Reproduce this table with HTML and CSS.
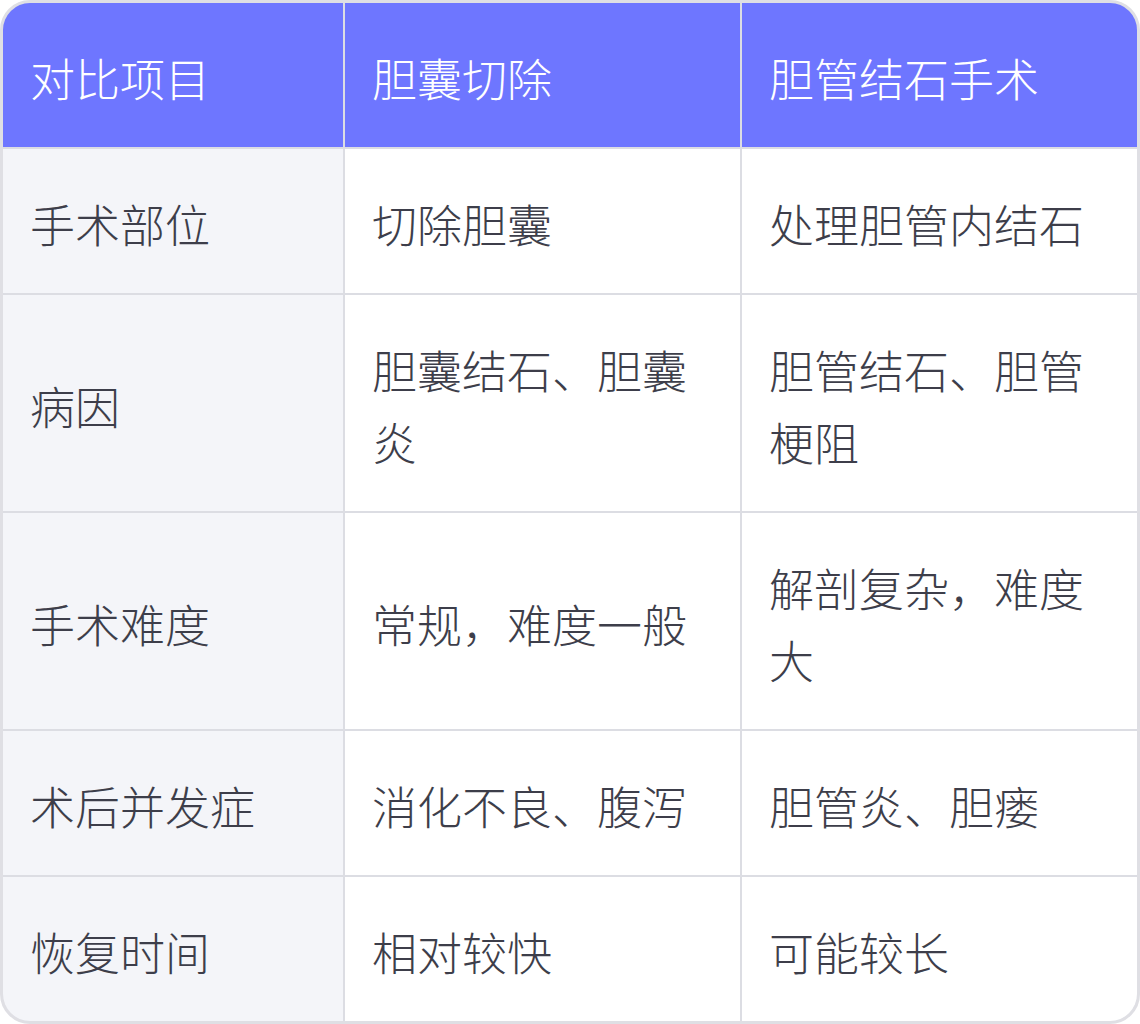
FILE: index.html
```html
<!DOCTYPE html>
<html lang="zh">
<head>
<meta charset="utf-8">
<link rel="stylesheet" href="styles.css">
</head>
<body>
<div class="table">
  <div class="cell head">对比项目</div>
  <div class="cell head">胆囊切除</div>
  <div class="cell head">胆管结石手术</div>

  <div class="cell label">手术部位</div>
  <div class="cell">切除胆囊</div>
  <div class="cell">处理胆管内结石</div>

  <div class="cell label">病因</div>
  <div class="cell">胆囊结石、胆囊炎</div>
  <div class="cell">胆管结石、胆管梗阻</div>

  <div class="cell label">手术难度</div>
  <div class="cell">常规，难度一般</div>
  <div class="cell">解剖复杂，难度大</div>

  <div class="cell label">术后并发症</div>
  <div class="cell">消化不良、腹泻</div>
  <div class="cell">胆管炎、胆瘘</div>

  <div class="cell label">恢复时间</div>
  <div class="cell">相对较快</div>
  <div class="cell">可能较长</div>
</div>
</body>
</html>
```

FILE: styles.css
```css
html, body {
  margin: 0;
  padding: 0;
  background: #ffffff;
}
body {
  font-family: "Noto Sans CJK SC", "Noto Sans", sans-serif;
}
.table {
  box-sizing: border-box;
  width: 1140px;
  height: 1024px;
  border: 3px solid #dfdfe4;
  border-radius: 30px;
  overflow: hidden;
  display: grid;
  grid-template-columns: 340px 395px 395px;
  grid-auto-rows: auto;
  gap: 2px;
  background: #dcdde3;
  align-content: start;
}
.cell {
  background: #ffffff;
  color: #3d3e4a;
  font-size: 45px;
  font-weight: 300;
  line-height: 72px;
  padding: 39px 27px 33px;
  display: flex;
  align-items: center;
}
.cell.label {
  background: #f4f5f9;
}
.cell.head {
  background: #6e76ff;
  color: #ffffff;
}
```
